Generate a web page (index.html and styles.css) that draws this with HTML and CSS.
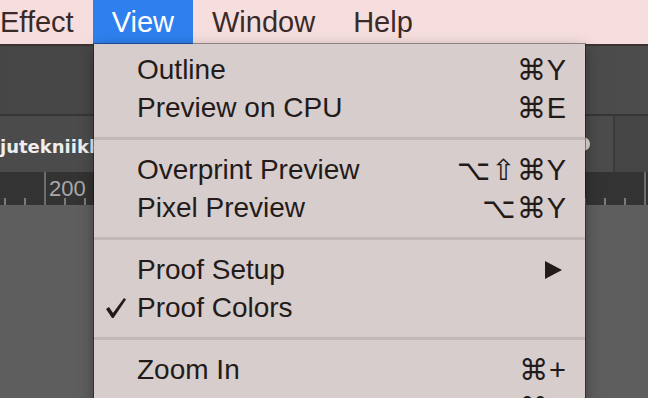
FILE: index.html
```html
<!DOCTYPE html>
<html lang="en">
<head>
  <meta charset="UTF-8" />
  <title>View menu</title>
  <link rel="stylesheet" href="styles.css">
</head>
<body>
  <div class="app">
    <nav class="menubar">
      <span class="menu-title">Effect</span>
      <span class="menu-title active">View</span>
      <span class="menu-title">Window</span>
      <span class="menu-title">Help</span>
    </nav>

    <div class="workspace">
      <div class="toolbar"></div>
      <div class="tabbar">
        <div class="tab">
          <span class="tab-name">jutekniikka.ai @ 100%</span>
          <span class="tab-close"></span>
        </div>
        <div class="tab-rest"></div>
      </div>
      <div class="ruler"><span class="ruler-label">200</span></div>
      <div class="canvas"></div>
    </div>

    <div class="dropdown">
      <div class="item"><span class="check"></span><span class="label">Outline</span><span class="keys">⌘Y</span></div>
      <div class="item"><span class="check"></span><span class="label">Preview on CPU</span><span class="keys">⌘E</span></div>
      <div class="sep"></div>
      <div class="item"><span class="check"></span><span class="label">Overprint Preview</span><span class="keys">⌥⇧⌘Y</span></div>
      <div class="item"><span class="check"></span><span class="label">Pixel Preview</span><span class="keys">⌥⌘Y</span></div>
      <div class="sep"></div>
      <div class="item">
        <span class="check"></span><span class="label">Proof Setup</span>
        <svg class="submenu" width="17" height="18" viewBox="0 0 17 18"><polygon points="0,0 17,9 0,18" fill="#231b19"/></svg>
      </div>
      <div class="item">
        <span class="check">
          <svg width="22" height="22" viewBox="0 0 22 22"><path d="M1 12 L4 10 L8 16 L19 1 L21 2.5 L8.5 21 L7 21 Z" fill="#231b19"/></svg>
        </span>
        <span class="label">Proof Colors</span>
      </div>
      <div class="sep"></div>
      <div class="item"><span class="check"></span><span class="label">Zoom In</span><span class="keys">⌘+</span></div>
      <div class="item"><span class="check"></span><span class="label">Zoom Out</span><span class="keys">⌘−</span></div>
    </div>
  </div>
</body>
</html>
```

FILE: styles.css
```css
body {
  margin: 0;
  background-color: #5e5e5e;
  font-family: 'Liberation Sans', Arial, sans-serif;
  overflow: hidden;
}
.app {
  position: relative;
  width: 648px;
  height: 398px;
  overflow: hidden;
}
.menubar {
  display: flex;
  height: 44px;
  margin-left: -19px;
  background-color: #f6dede;
  border-bottom: 2px solid #3d3232;
}
.menu-title {
  padding: 0 19px;
  font-size: 29px;
  line-height: 44px;
  color: #3a2a28;
}
.menu-title.active {
  background-color: #2f80ee;
  color: #ffffff;
}
.toolbar {
  height: 68px;
  background: linear-gradient(to right, #464646, #4c4c4c);
  border-bottom: 2px solid #363636;
}
.tabbar {
  display: flex;
  height: 56px;
}
.tab {
  display: flex;
  align-items: center;
  justify-content: space-between;
  width: 613px;
  background-color: #4b4b4b;
  border-right: 2px solid #3b3b3b;
}
.tab-name {
  font-family: 'DejaVu Sans', sans-serif;
  font-weight: bold;
  font-size: 18px;
  color: #eeeeee;
  white-space: nowrap;
  margin-top: 4px;
}
.tab-close {
  width: 14px;
  height: 14px;
  margin-right: 23px;
  border-radius: 50%;
  background-color: #e6ddd3;
  flex-shrink: 0;
}
.tab-rest {
  flex: 1;
  background-color: #454545;
}
.ruler {
  height: 33px;
  background-color: #333333;
  background-image:
    repeating-linear-gradient(to right, transparent 0 44px, #6e6e6e 44px 46px, transparent 46px 600px),
    repeating-linear-gradient(to right, transparent 0 4px, #7a7a7a 4px 6px, transparent 6px 20px);
  background-size: 100% 33px, 100% 7px;
  background-position: 0 0, 0 100%;
  background-repeat: no-repeat;
}
.ruler-label {
  display: inline-block;
  padding-left: 49px;
  font-size: 22px;
  line-height: 33px;
  color: #a9a9a9;
}
.canvas {
  height: 193px;
  background-color: #5e5e5e;
}
.dropdown {
  position: absolute;
  top: 44px;
  left: 94px;
  width: 491px;
  padding-top: 7px;
  background-color: #d6cdcc;
  box-shadow: 0 0 0 1px rgba(0, 0, 0, 0.35), 0 4px 14px rgba(0, 0, 0, 0.35);
}
.item {
  display: flex;
  align-items: center;
  height: 38px;
  padding: 0 19px 0 11px;
  font-size: 28px;
  line-height: 38px;
  color: #231b19;
}
.check {
  display: flex;
  align-items: center;
  width: 32px;
  height: 38px;
}
.label {
  flex: 1;
  white-space: nowrap;
}
.keys {
  font-family: 'Liberation Sans', 'DejaVu Sans', sans-serif;
  font-size: 29px;
  letter-spacing: 1px;
  margin-right: -1px;
}
.submenu {
  margin-right: 4px;
}
.sep {
  height: 3px;
  margin: 10px 0 11px;
  background-color: #c3b8b7;
}
```
